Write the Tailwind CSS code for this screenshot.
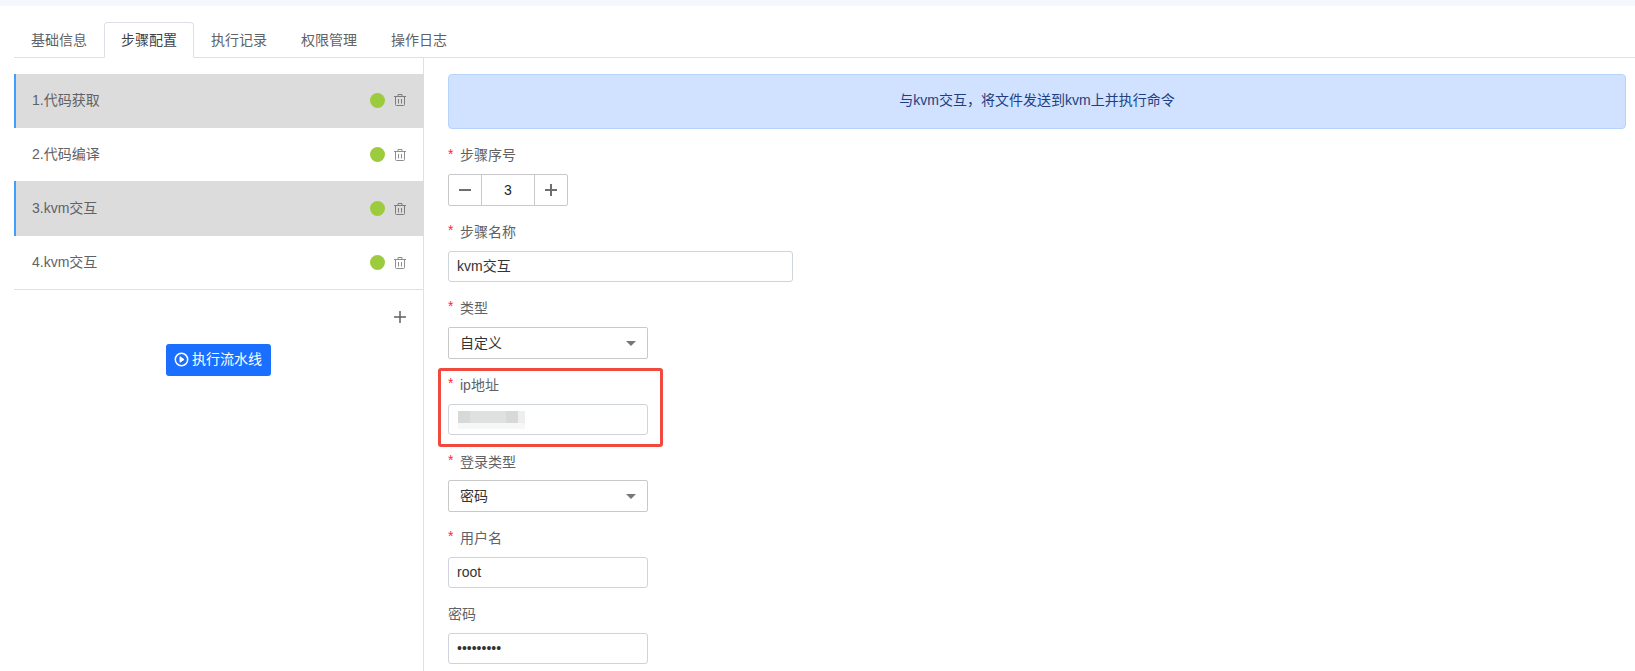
<!DOCTYPE html>
<html lang="zh">
<head>
<meta charset="utf-8">
<script src="https://cdn.jsdelivr.net/npm/@tailwindcss/browser@4"></script>
</head>
<body class="bg-white font-['Liberation_Sans','Noto_Sans_CJK_SC',sans-serif] text-[14px] text-[#606266]">
<div class="w-[1635px] h-[671px] overflow-hidden flex flex-col">
  <div class="h-[6px] bg-[#f4f7fb] shrink-0"></div>
  <div class="ml-[14px] h-[52px] pt-[16px] flex border-b border-[#e0e0e0] shrink-0">
    <div class="h-[36px] w-[90px] flex items-center justify-center">基础信息</div>
    <div class="h-[36px] w-[90px] flex items-center justify-center border border-b-white border-[#dcdfe6] rounded-t-[4px] text-[#404246] bg-white">步骤配置</div>
    <div class="h-[36px] w-[90px] flex items-center justify-center">执行记录</div>
    <div class="h-[36px] w-[90px] flex items-center justify-center">权限管理</div>
    <div class="h-[36px] w-[90px] flex items-center justify-center">操作日志</div>
  </div>
  <div class="flex flex-1 ml-[14px] mt-[16px] min-h-0">
    <div class="w-[410px] shrink-0 -mt-[16px] pt-[16px] border-r border-[#e0e0e0]">
      <div class="h-[54px] pb-[2px] -mr-px bg-[#dcdcdc] border-l-2 border-[#409eff] flex items-center pl-[16px] pr-[17px]">
        <span class="flex-1">1.代码获取</span>
        <span class="w-[15px] h-[15px] rounded-full bg-[#9ccc3d]"></span>
        <svg class="ml-[8px] w-[14px] h-[14px]" viewBox="0 0 14 14" fill="none" stroke="#7d7d7d" stroke-width="1"><path d="M1 3.500h12M5 3.500V1.500h4v2M2.500 3.500v8a1 1 0 0 0 1 1h7a1 1 0 0 0 1-1v-8M5.500 6v4.500M8.500 6v4.500"/></svg>
      </div>
      <div class="h-[53px] flex items-center pl-[18px] pr-[16px]">
        <span class="flex-1">2.代码编译</span>
        <span class="w-[15px] h-[15px] rounded-full bg-[#9ccc3d]"></span>
        <svg class="ml-[8px] w-[14px] h-[14px]" viewBox="0 0 14 14" fill="none" stroke="#8f8f8f" stroke-width="1"><path d="M1 3.500h12M5 3.500V1.500h4v2M2.500 3.500v8a1 1 0 0 0 1 1h7a1 1 0 0 0 1-1v-8M5.500 6v4.500M8.500 6v4.500"/></svg>
      </div>
      <div class="h-[55px] -mr-px bg-[#dcdcdc] border-l-2 border-[#409eff] flex items-center pl-[16px] pr-[17px]">
        <span class="flex-1">3.kvm交互</span>
        <span class="w-[15px] h-[15px] rounded-full bg-[#9ccc3d]"></span>
        <svg class="ml-[8px] w-[14px] h-[14px]" viewBox="0 0 14 14" fill="none" stroke="#7d7d7d" stroke-width="1"><path d="M1 3.500h12M5 3.500V1.500h4v2M2.500 3.500v8a1 1 0 0 0 1 1h7a1 1 0 0 0 1-1v-8M5.500 6v4.500M8.500 6v4.500"/></svg>
      </div>
      <div class="h-[54px] border-b border-[#e0e0e0] flex items-center pl-[18px] pr-[16px]">
        <span class="flex-1">4.kvm交互</span>
        <span class="w-[15px] h-[15px] rounded-full bg-[#9ccc3d]"></span>
        <svg class="ml-[8px] w-[14px] h-[14px]" viewBox="0 0 14 14" fill="none" stroke="#8f8f8f" stroke-width="1"><path d="M1 3.500h12M5 3.500V1.500h4v2M2.500 3.500v8a1 1 0 0 0 1 1h7a1 1 0 0 0 1-1v-8M5.500 6v4.500M8.500 6v4.500"/></svg>
      </div>
      <div class="flex justify-end pr-[16px] pt-[20px]">
        <svg class="w-[14px] h-[14px]" viewBox="0 0 14 14" stroke="#606266" stroke-width="1.500"><path d="M7 1v12M1 7h12"/></svg>
      </div>
      <div class="flex justify-center mt-[20px] pr-[1px]">
        <div class="h-[32px] w-[105px] pb-[2px] rounded-[3px] bg-[#1a6fff] text-white flex items-center justify-center gap-[3px]">
          <svg class="w-[15px] h-[15px]" viewBox="0 0 15 15" fill="none" stroke="#fff" stroke-width="1.500"><circle cx="7.500" cy="7.500" r="6.200"/><path d="M6 4.800l4 2.700-4 2.700z" fill="#fff" stroke-width="1"/></svg>
          <span>执行流水线</span>
        </div>
      </div>
    </div>
    <div class="relative flex-1 pl-[24px] pr-[9px]">
      <div class="h-[55px] bg-[#d0e2ff] border border-[#b5d3fb] rounded-[4px] flex items-center justify-center pb-[2px] text-[#1f3f7f]">与kvm交互，将文件发送到kvm上并执行命令</div>

      <div class="mt-[15px] h-[29px] pb-[6px] flex items-center"><span class="text-[#ff1f3d] w-[12px] -mt-[3px]">*</span>步骤序号</div>
      <div class="mt-[1px] w-[120px] h-[32px] flex border border-[#c9c9c9] rounded-[2px] text-[#222]">
        <span class="w-[33px] border-r border-[#c9c9c9] flex items-center justify-center"><svg class="w-[12px] h-[12px]" viewBox="0 0 12 12" stroke="#6e6e6e" stroke-width="2"><path d="M0 6h12"/></svg></span>
        <span class="flex-1 flex items-center justify-center">3</span>
        <span class="w-[33px] border-l border-[#c9c9c9] flex items-center justify-center"><svg class="w-[12px] h-[12px]" viewBox="0 0 12 12" stroke="#6e6e6e" stroke-width="2"><path d="M0 6h12M6 0v12"/></svg></span>
      </div>

      <div class="mt-[13px] h-[32px] pb-[6px] flex items-center"><span class="text-[#ff1f3d] w-[12px] -mt-[3px]">*</span>步骤名称</div>
      <div class="w-[345px] h-[31px] flex items-center px-[8px] border border-[#cfd3dc] rounded-[3px] text-[#333]">kvm交互</div>

      <div class="mt-[13px] h-[32px] pb-[6px] flex items-center"><span class="text-[#ff1f3d] w-[12px] -mt-[3px]">*</span>类型</div>
      <div class="w-[200px] h-[32px] flex items-center justify-between pl-[11px] pr-[11px] border border-[#c9c9c9] rounded-[2px] text-[#333]">自定义<span class="w-0 h-0 border-x-[5px] border-t-[5px] border-x-transparent border-t-[#777]"></span></div>

      <div class="mt-[13px] h-[32px] pb-[6px] flex items-center"><span class="text-[#ff1f3d] w-[12px] -mt-[3px]">*</span>ip地址</div>
      <div class="w-[200px] h-[31px] flex items-center px-[9px] border border-[#cfd3dc] rounded-[3px]">
        <div class="w-[67px] flex flex-col">
          <div class="h-[12px] flex">
            <span class="w-[12px] bg-[#d8d8d8]"></span>
            <span class="w-[36px] bg-[#dfe0e0]"></span>
            <span class="w-[12px] bg-[#d8d8d8]"></span>
            <span class="w-[7px] bg-[#eeeeee]"></span>
          </div>
          <div class="h-[6px] bg-[#f6f7f7]"></div>
        </div>
      </div>

      <div class="mt-[14px] h-[32px] pb-[6px] flex items-center"><span class="text-[#ff1f3d] w-[12px] -mt-[3px]">*</span>登录类型</div>
      <div class="-mt-px w-[200px] h-[32px] flex items-center justify-between pl-[11px] pr-[11px] border border-[#c9c9c9] rounded-[2px] text-[#333]">密码<span class="w-0 h-0 border-x-[5px] border-t-[5px] border-x-transparent border-t-[#777]"></span></div>

      <div class="mt-[13px] h-[32px] pb-[6px] flex items-center"><span class="text-[#ff1f3d] w-[12px] -mt-[3px]">*</span>用户名</div>
      <div class="w-[200px] h-[31px] flex items-center px-[8px] border border-[#cfd3dc] rounded-[3px] text-[#333]">root</div>

      <div class="mt-[13px] h-[32px] pb-[6px] flex items-center">密码</div>
      <div class="w-[200px] h-[31px] flex items-center px-[8px] border border-[#cfd3dc] rounded-[3px] text-[#333]">•••••••••</div>

      <div class="absolute left-[14px] top-[294px] w-[225px] h-[79px] border-[3px] border-[#f0493e] rounded-[3px]"></div>
    </div>
  </div>
</div>
</body>
</html>
